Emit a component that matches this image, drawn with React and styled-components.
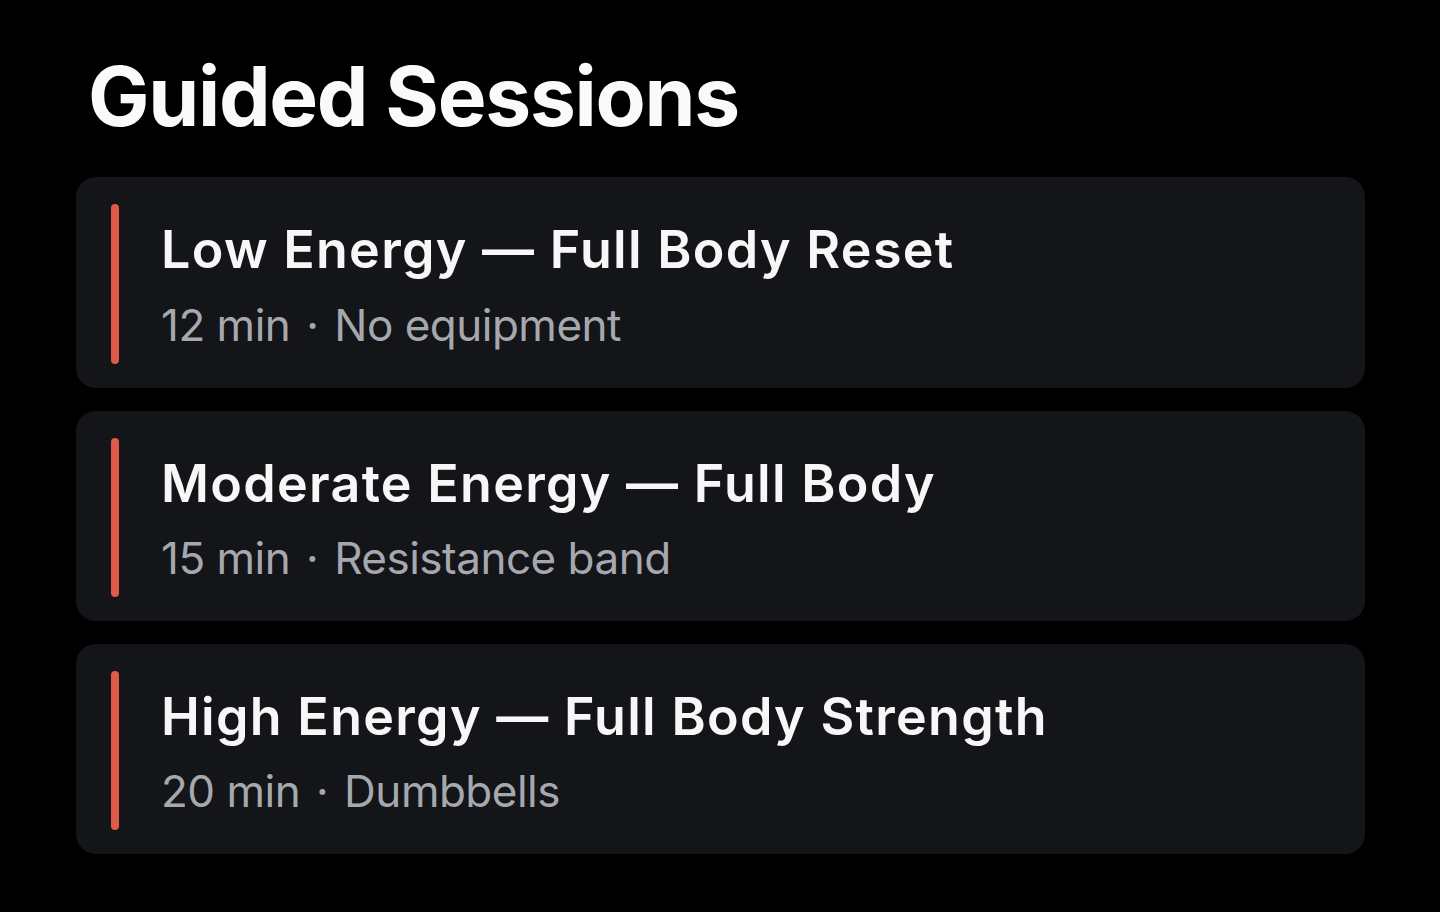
import React from "react";
import styled, { createGlobalStyle } from "styled-components";

const GlobalStyle = createGlobalStyle`
  html, body {
    margin: 0;
    padding: 0;
    background: #000;
  }
  body {
    font-family: Inter, "Noto Sans", sans-serif;
    -webkit-font-smoothing: antialiased;
  }
`;

const Page = styled.main`
  min-height: 912px;
  box-sizing: border-box;
  padding: 48px 75px 40px 76px;
  background: #000;
`;

const Heading = styled.h1`
  margin: 0 0 31px 12px;
  font-size: 82px;
  line-height: 1.2;
  font-weight: 700;
  letter-spacing: -1.3px;
  color: #fafafa;
`;

const List = styled.ul`
  list-style: none;
  margin: 0;
  padding: 0;
  display: flex;
  flex-direction: column;
  gap: 23px;
`;

const Card = styled.li`
  display: flex;
  align-items: stretch;
  gap: 42px;
  padding: 27px 35px 24px;
  border-radius: 20px;
  background: #141518;
`;

const Accent = styled.span`
  flex: 0 0 8px;
  border-radius: 4px;
  background: ${(p) => p.$color};
`;

const Body = styled.div`
  display: flex;
  flex-direction: column;
  gap: 17px;
  padding: 15px 0 12px;
`;

const Title = styled.h2`
  margin: 0;
  font-size: 52px;
  line-height: 1.2;
  font-weight: 600;
  letter-spacing: 1.3px;
  color: #f7f7f7;
`;

const Meta = styled.p`
  margin: 0;
  font-size: 44px;
  line-height: 1.2;
  font-weight: 400;
  letter-spacing: -0.5px;
  color: #a6a8b0;
`;

const Dot = styled.span`
  margin: 0 4px;
`;

const sessions = [
  { title: "Low Energy — Full Body Reset", duration: "12 min", gear: "No equipment" },
  { title: "Moderate Energy — Full Body", duration: "15 min", gear: "Resistance band" },
  { title: "High Energy — Full Body Strength", duration: "20 min", gear: "Dumbbells" },
];

export default function App() {
  return (
    <>
      <GlobalStyle />
      <Page>
        <Heading>Guided Sessions</Heading>
        <List>
          {sessions.map((s) => (
            <Card key={s.title}>
              <Accent $color="#e05a4b" />
              <Body>
                <Title>{s.title}</Title>
                <Meta>
                  {s.duration}{" "}
                  <Dot>·</Dot>{" "}
                  {s.gear}
                </Meta>
              </Body>
            </Card>
          ))}
        </List>
      </Page>
    </>
  );
}
